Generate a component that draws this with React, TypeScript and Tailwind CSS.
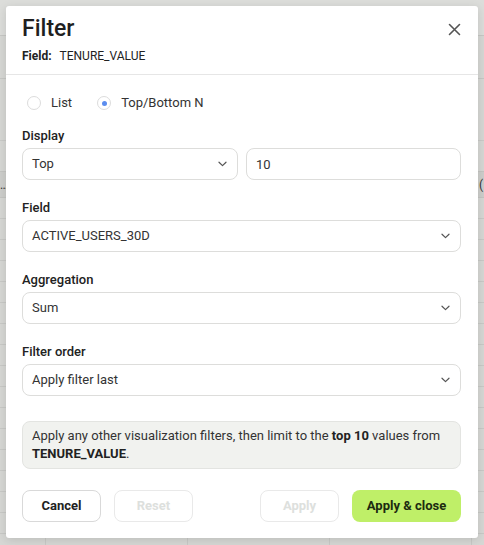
import { useState } from "react";

type Row = string[];

const rows: Row[] = Array.from({ length: 17 }, () => ["", "", "", "", ""]);
rows[16] = ["3044", "4340", "33.5", "34.5", ""];

function Chevron() {
  return (
    <svg width="9" height="6" viewBox="0 0 9 6" fill="none" className="shrink-0">
      <path d="M1 1.2L4.5 4.6L8 1.2" stroke="#555" strokeWidth="1.2" strokeLinecap="round" strokeLinejoin="round" />
    </svg>
  );
}

function Select({ value, className = "" }: { value: string; className?: string }) {
  return (
    <button
      type="button"
      className={`flex h-8 items-center justify-between rounded-lg border border-[#dddddb] bg-white pl-[9px] pr-[10px] text-left text-[13px] text-[#333] ${className}`}
    >
      <span>{value}</span>
      <Chevron />
    </button>
  );
}

function Label({ children }: { children: string }) {
  return <div className="mb-1 text-[13px] font-medium leading-4 text-[#222]">{children}</div>;
}

function Radio({ label, checked, onClick }: { label: string; checked: boolean; onClick: () => void }) {
  return (
    <button type="button" onClick={onClick} className="flex h-4 items-center gap-[10px] text-[13px] text-[#333]">
      <span className="flex h-[14px] w-[14px] items-center justify-center rounded-full border border-[#dcdcdc] bg-white">
        {checked && <span className="h-[5px] w-[5px] rounded-full bg-[#5b8def]" />}
      </span>
      {label}
    </button>
  );
}

export default function App() {
  const [mode, setMode] = useState<"list" | "top">("top");

  return (
    <div className="relative h-[545px] w-[484px] overflow-hidden bg-[#d6d7d4] font-['Roboto',sans-serif]">
      {/* dimmed table behind the dialog */}
      <div className="h-[36px] border-b border-[#c6c7c4] bg-[#dcdddA]" />
      <div className="h-[43px] border-b border-[#c6c7c4]" />
      <div className="h-[62px] border-b border-[#c9cac7]" />
      <div className="h-[30px]" />
      <div className="flex h-[27px] items-center justify-between border-y border-[#c4c5c2] bg-[#cdcecb] text-[12px] text-[#333]">
        <span>…</span>
        <span className="pr-[1px]">(</span>
      </div>
      {rows.map((r, i) => (
        <div
          key={i}
          className="grid h-[21px] grid-cols-[46px_142px_142px_142px_12px] border-b border-[#c8c9c6] text-[12px] text-[#333]"
        >
          {r.map((c, j) => (
            <div key={j} className={`flex items-center px-2 ${j > 0 ? "justify-end" : ""} ${j < 4 ? "border-r border-[#c8c9c6]" : ""}`}>
              <span className="translate-y-[10px]">{c}</span>
            </div>
          ))}
        </div>
      ))}

      {/* dialog */}
      <div className="absolute left-[6px] top-[6px] w-[472px] rounded-[3px] bg-white shadow-[0_2px_10px_rgba(0,0,0,0.12)]">
        <div className="border-b border-[#e6e6e6] pb-[10px] pl-4 pr-[17px] pt-[7px]">
          <div className="flex items-center justify-between">
            <h1 className="text-[23px] font-medium leading-8 text-[#1f1f1f]">Filter</h1>
            <button type="button" aria-label="Close" className="flex h-[14px] w-[14px] items-center justify-center">
              <svg width="13" height="13" viewBox="0 0 13 13" fill="none">
                <path d="M1.5 1.5L11.5 11.5M11.5 1.5L1.5 11.5" stroke="#555" strokeWidth="1.6" strokeLinecap="round" />
              </svg>
            </button>
          </div>
          <div className="mt-[3px] flex gap-2 text-[12px] leading-4 text-[#222]">
            <span className="font-bold">Field:</span>
            <span>TENURE_VALUE</span>
          </div>
        </div>

        <div className="px-4 pb-4 pr-[17px] pt-5">
          <div className="flex items-center gap-[25px] pl-[5px]">
            <Radio label="List" checked={mode === "list"} onClick={() => setMode("list")} />
            <Radio label="Top/Bottom N" checked={mode === "top"} onClick={() => setMode("top")} />
          </div>

          <div className="mt-[17px]">
            <Label>Display</Label>
            <div className="flex gap-2">
              <Select value="Top" className="w-[216px]" />
              <input
                defaultValue="10"
                className="h-8 flex-1 rounded-lg border border-[#dddddb] px-[9px] text-[13px] text-[#333] outline-none"
              />
            </div>
          </div>

          <div className="mt-5">
            <Label>Field</Label>
            <Select value="ACTIVE_USERS_30D" className="w-full" />
          </div>

          <div className="mt-5">
            <Label>Aggregation</Label>
            <Select value="Sum" className="w-full" />
          </div>

          <div className="mt-5">
            <Label>Filter order</Label>
            <Select value="Apply filter last" className="w-full" />
          </div>

          <div className="mt-[25px] rounded-lg border border-[#e3e4e1] bg-[#f1f2ef] px-[9px] py-[5px] text-[13px] leading-[18px] text-[#333]">
            Apply any other visualization filters, then limit to the <b className="font-bold text-[#222]">top 10</b> values from
            <br />
            <b className="font-bold text-[#222]">TENURE_VALUE</b>.
          </div>

          <div className="mt-[21px] flex justify-between">
            <div className="flex gap-[13px]">
              <button type="button" className="h-8 w-[79px] rounded-lg border border-[#d9d9d9] text-[13px] font-bold text-[#222]">
                Cancel
              </button>
              <button type="button" disabled className="h-8 w-[79px] rounded-lg border border-[#e9e9e9] text-[13px] font-bold text-[#dde0dd]">
                Reset
              </button>
            </div>
            <div className="flex gap-[13px]">
              <button type="button" disabled className="h-8 w-[79px] rounded-lg border border-[#e9e9e9] text-[13px] font-bold text-[#dde0dd]">
                Apply
              </button>
              <button type="button" className="h-8 w-[109px] rounded-lg bg-[#bfef68] text-[13px] font-bold text-[#1c2b10]">
                Apply &amp; close
              </button>
            </div>
          </div>
        </div>
      </div>
    </div>
  );
}
